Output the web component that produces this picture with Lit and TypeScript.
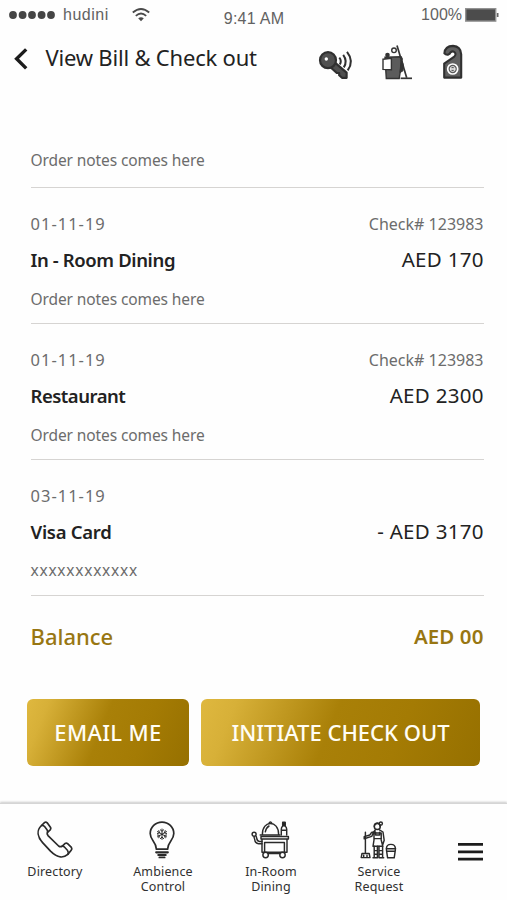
import { LitElement, html, svg, css, nothing } from "lit";
import { customElement } from "lit/decorators.js";

interface Charge {
  date: string;
  check?: string;
  title: string;
  cls: string;
  amount: string;
  note: string;
  noteCls?: string;
}

const charges: Charge[] = [
  { date: "01-11-19", check: "Check# 123983", title: "In - Room Dining", cls: "dining", amount: "AED 170", note: "Order notes comes here" },
  { date: "01-11-19", check: "Check# 123983", title: "Restaurant", cls: "rest", amount: "AED 2300", note: "Order notes comes here" },
  { date: "03-11-19", title: "Visa Card", cls: "visa", amount: "- AED 3170", note: "xxxxxxxxxxxx", noteCls: "masked" },
];

const phone = svg`
  <path d="M5.5 4.5 L8.7 1.4 Q10 .6 11.2 1.8 L14.6 6.4 Q15.2 7.8 14.2 8.8 L11.5 11.3 Q10.6 12.8 12 14.6 L22.6 25 Q24.4 26.2 26 25.3 L29.2 22.4 Q30.4 21.6 31.6 22.6 L35.4 26.4 Q36.4 27.8 35.2 29.2 L31.8 33.4 C27 37.6 20.5 36.2 14.5 30.2 L6.6 21.6 C1.6 16 .2 9.4 5.5 4.5Z" stroke-width="1.7"/>
  <path d="M5.5 4.5 Q7.4 4.2 8.6 5.6 L11 8.8 Q11.8 10 11.5 11.3 M26 25.3 Q27 24.8 28.2 25.8 L31.4 29.2 Q33 31.4 31.8 33.4" stroke-width="1.6"/>`;

const bulb = svg`
  <path d="M7.4 28.2 C7.4 20.5 1.2 19.5 1.2 12.6 A11.8 11.5 0 0 1 24.8 12.6 C24.8 19.5 18.6 20.5 18.6 28.2Z" stroke-width="1.7"/>
  <path d="M7.2 31.3H18.8" stroke-width="2.2"/><path d="M9.2 34H16.8M10.4 36.4H15.6" stroke-width="1.9"/>
  <path d="M13 8V18.4M8.5 10.6L17.5 15.8M8.5 15.8L17.5 10.6M11.3 8.8L13 10.3L14.7 8.8M11.3 17.6L13 16.1L14.7 17.6M8.4 12.4L10.6 12L9.8 9.6M17.6 12.4L15.4 12L16.2 9.6M8.4 14L10.6 14.4L9.8 16.8M17.6 14L15.4 14.4L16.2 16.8" stroke-width="1"/>`;

const trolley = svg`
  <path d="M11.4 13.3C11.4 -1.2 27.6 -1.2 27.6 13.3M9.2 14H29M17.8 2.6Q19.4 -.8 21 2.6M14.3 10.8Q15.2 6.6 18 5"/>
  <path d="M30.3 14V8.2Q30.3 6.4 31.7 5V1.8H34.1V5Q35.7 6.4 35.7 8.2V14M30.4 9.2H35.6"/><path d="M31.7 1.2H34.1V4.8H31.7Z" fill="#222"/>
  <path d="M10 15.4H37.4V18H10ZM11 18V31.2H36V18M13.6 21.4H33.4V31M13.6 21.4V31"/>
  <path d="M11 22.8H7.7Q3.9 22.4 3.7 18.4L3 16M11 20.4H8.2Q6 20 5.8 17.4L5.2 15.6"/><circle cx="3.1" cy="13.2" r="2"/>
  <circle cx="14.6" cy="34" r="2.7"/><circle cx="31.5" cy="34" r="2.7"/><path d="M17 32.4H29"/>`;

const maid = svg`
  <path d="M5.4 11.3V32M2 32.5H9.2L10 36.6H1.2ZM3.7 34.2V36M7 34.2V36"/>
  <circle cx="17.3" cy="5.5" r="3"/><path d="M14.3 5.5Q14.4 2 18.2 2.1Q20.2 3.1 20.2 5.6"/><circle cx="20.8" cy="2.6" r="1.6"/>
  <path d="M15.4 8.8L13.3 11.4L11.7 15.4L4.2 17.8V15.6L9.8 14L11.6 11.4Q13.4 10.6 15.2 10.6M19.4 8.8L23 11L24.2 19.3L22.4 24.8M14 12V19L13 25.3H22.8L21.2 19V12ZM14 17.6H21.4M15.6 11.2V14H19.6V11.2"/>
  <path d="M14.2 25.3V36.8H17.4V25.3M19 25.3V36.8H22.6V25.3M14.2 29.6H17.4M19 29.6H22.4M14.2 33.3H17.4M19 33.3H22.5M13 36.8H17.5M19 36.8H23.7"/>
  <path d="M26.2 27.7H35.6M26.4 28.6L27.6 36.8H34.2L35.4 28.6M26.4 27.5C26.6 22 35.2 22 35.4 27.5M27 30.2H34.8"/>`;

@customElement("app-root")
export class AppRoot extends LitElement {
  static styles = css`
    :host { display: block; }
    * { box-sizing: border-box; }
    .page { height: 900px; display: flex; flex-direction: column; background: #fefefe; color: #222; font-family: "Noto Sans", sans-serif; overflow: hidden; white-space: nowrap; }
    svg { display: block; flex: none; overflow: visible; }
    .status { height: 32px; display: grid; grid-template-columns: 1fr auto 1fr; padding: 0 8px 0 9px; font: 16px/30px "Liberation Sans", sans-serif; color: #626262; }
    .left, .right { display: flex; align-items: center; height: 29px; }
    .right { justify-content: flex-end; gap: 3px; }
    .carrier { margin-left: 7px; letter-spacing: .5px; }
    .wifi { margin-left: 23px; }
    .time { line-height: 37px; letter-spacing: .25px; }
    .head { height: 119px; display: flex; align-items: flex-start; padding: 12px 44px 0 14px; }
    .back { margin-top: 4px; }
    .title { margin: 0 auto 0 17.5px; font-size: 22px; line-height: 27px; font-weight: 400; letter-spacing: -.2px; }
    .tools { display: flex; align-items: flex-start; }
    .list { padding: 0 23.5px 0 30.5px; }
    .note { font-size: 15.5px; line-height: 30px; height: 30px; color: #6c6c6c; letter-spacing: -.1px; }
    .masked { letter-spacing: .75px; line-height: 29px; }
    .first { height: 37px; line-height: 18px; border-bottom: 1px solid #d6d4d2; }
    .item { height: 136.2px; padding-top: 24px; border-bottom: 1px solid #d6d4d2; }
    .item:last-child { height: 136px; padding-top: 23.4px; }
    .row { display: flex; justify-content: space-between; }
    .meta { font-size: 16px; line-height: 24px; color: #6c6c6c; }
    .date { font-size: 16.5px; letter-spacing: 1px; }
    .main { line-height: 47px; height: 48px; }
    .name { font-size: 18.5px; font-weight: 600; }
    .dining { letter-spacing: -.38px; }
    .rest { letter-spacing: -.5px; }
    .visa { letter-spacing: -.28px; }
    .amount { font-size: 20.5px; letter-spacing: .3px; margin-right: -.3px; }
    .balance { height: 82.4px; padding: 0 23.5px 0 30.5px; color: #987612; line-height: 81px; }
    .bal-label { font-size: 22px; font-weight: 500; }
    .bal-value { font-size: 20.5px; font-weight: 600; letter-spacing: .1px; }
    .actions { display: flex; gap: 12px; padding: 20px 27px 0; height: 124px; }
    .btn { border: 0; padding: 0; height: 67px; border-radius: 6px; color: #fffdf5; font: 500 22px/67px "Noto Sans", sans-serif; text-align: center; background: linear-gradient(112deg, #dfb83f 0%, #d7b038 12%, #a98008 46%, #a47b04 70%, #967000 100%); }
    .email { width: 162px; letter-spacing: .35px; }
    .checkout { width: 279px; }
    .nav { flex: 1; display: flex; background: #fefefe; border-top: 1px solid #d5d5d5; box-shadow: 0 -1px 2px #c9c9c9; padding: 17px 0 0 1px; font-size: 12.5px; line-height: 15px; color: #303030; }
    .tab { width: 108px; display: flex; flex-direction: column; align-items: center; text-align: center; gap: 5px; letter-spacing: .15px; }
    .tab svg { margin-right: 2px; fill: none; stroke: #2a2a2a; stroke-width: 1.45; stroke-linejoin: round; stroke-linecap: round; }
    .burger { margin: 22px 0 0 25px; }
  `;

  render() {
    return html`<div class="page">
      <div class="status">
        <div class="left">
          <svg width="47" height="8" fill="#454545">${[4, 13.6, 23, 32.6, 42].map((x) => svg`<circle cx=${x} cy="4" r="3.9"/>`)}</svg>
          <span class="carrier">hudini</span>
          <svg class="wifi" width="18" height="14" viewBox="0 0 18 14" fill="none" stroke="#4a4a4a" stroke-width="1.8"><path d="M.8 4.5Q9 -2.6 17.2 4.5M3.8 7.9Q9 3.2 14.2 7.9"/><path d="M6.2 10.3Q9 8.2 11.8 10.3L9 13.2Z" fill="#4a4a4a" stroke="none"/></svg>
        </div>
        <span class="time">9:41 AM</span>
        <div class="right"><span>100%</span>
          <svg width="34" height="14" viewBox="0 0 34 14"><rect x=".7" y=".7" width="30" height="12.4" fill="#4c4c4c" stroke="#929292" stroke-width="1.4"/><path d="M31.8 5H33.5V9H31.8Z" fill="#666"/></svg>
        </div>
      </div>
      <div class="head">
        <svg class="back" width="14" height="22" viewBox="0 0 14 22"><path d="M12.2 1.4L2.6 10.8L12.2 20.4" fill="none" stroke="#1c1c1c" stroke-width="3.4"/></svg>
        <h1 class="title">View Bill &amp; Check out</h1>
        <div class="tools">
          <svg width="144" height="38" viewBox="0 0 144 38">
            <g fill="none" stroke="#303030">
              <path d="M16 18.6L27.6 28.7V33.8H23L20.2 31.2V29H17.8L11.5 23.2Z" fill="#505050" stroke-width="2.2" stroke-linejoin="round"/>
              <circle cx="9" cy="16.2" r="8" fill="#505050" stroke-width="2.2"/>
              <circle cx="7.3" cy="15" r="1.7" fill="#fff" stroke="none"/>
              <path d="M20.3 13.6Q23 16.8 20.8 20.6M24.2 10.8Q28.8 17 24.8 23.4M28 7.8Q35.4 17 28.7 26.4" stroke-width="2"/>
            </g>
            <g transform="translate(63 1)" fill="none" stroke="#333">
              <path d="M3 12.2L19 11.8L20.2 14L17.2 33.5H4.3Z" fill="#5b5b5b" stroke-width="1.4"/>
              <path d="M19 15Q22.5 18 20.8 26L18 27.5Z" fill="#333"/>
              <path d="M1 14.2L9.4 13.2V24.8L1 24.4Z" fill="#fff" stroke-width="1.4"/>
              <circle cx="5.5" cy="10" r="2.3" fill="#333" stroke="none"/>
              <circle cx="12" cy="5.3" r="2.3" stroke-width="1.4"/>
              <path d="M15 .5L24.7 32.8" stroke-width="1.7"/><path d="M18.6 33.3H30" stroke-width="1.7"/>
            </g>
            <g transform="translate(124 1)" fill="none" stroke="#303030" stroke-width="2.1" stroke-linejoin="round">
              <path d="M1.2 32.6V18.6L11.3 11.7Q13 10.2 12.4 8.4Q10.7 5 7.5 7.3Q7 8.8 5.2 9.6Q2.8 10 1.4 8.4Q2 1 10 .9Q17.8 1.4 18.2 9.4V32.6Z" fill="#606060"/>
              <circle cx="9.7" cy="24" r="5" fill="#5a5a5a" stroke="#fff" stroke-width="1.7"/><circle cx="9.7" cy="24" r="2.5" stroke="#eee" stroke-width="1"/><path d="M7.5 24H12" stroke="#fff" stroke-width="1.4"/>
            </g>
          </svg>
        </div>
      </div>
      <div class="list">
        <div class="note first">Order notes comes here</div>
        ${charges.map((c) => html`<div class="item">
          <div class="row meta"><span class="date">${c.date}</span>${c.check ? html`<span>${c.check}</span>` : nothing}</div>
          <div class="row main"><span class="name ${c.cls}">${c.title}</span><span class="amount">${c.amount}</span></div>
          <div class="note ${c.noteCls ?? ""}">${c.note}</div>
        </div>`)}
      </div>
      <div class="row balance"><span class="bal-label">Balance</span><span class="bal-value">AED 00</span></div>
      <div class="actions"><button class="btn email">EMAIL ME</button><button class="btn checkout">INITIATE CHECK OUT</button></div>
      <div class="nav">
        <div class="tab"><svg width="36" height="38">${phone}</svg><span>Directory</span></div>
        <div class="tab"><svg width="26" height="38">${bulb}</svg><span>Ambience<br>Control</span></div>
        <div class="tab"><svg width="38" height="38">${trolley}</svg><span>In-Room<br>Dining</span></div>
        <div class="tab"><svg width="36" height="38">${maid}</svg><span>Service<br>Request</span></div>
        <svg class="burger" width="25" height="18"><path d="M0 1.4H25M0 8.9H25M0 16.1H25" stroke="#1c1c1c" stroke-width="2.7"/></svg>
      </div>
    </div>`;
  }
}
